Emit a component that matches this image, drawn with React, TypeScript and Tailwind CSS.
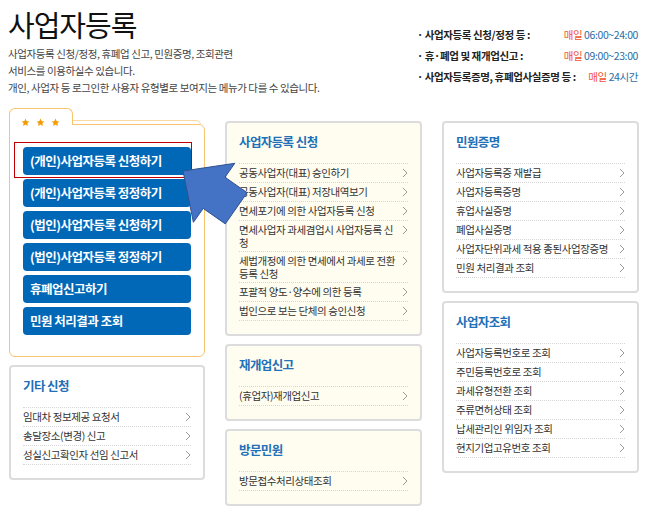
import type { ReactNode } from "react";

type Entry = string | string[];

const applyItems: Entry[] = [
  "공동사업자(대표) 승인하기",
  "공동사업자(대표) 저장내역보기",
  "면세포기에 의한 사업자등록 신청",
  ["면세사업자 과세겸업시 사업자등록 신", "청"],
  ["세법개정에 의한 면세에서 과세로 전환", "등록 신청"],
  "포괄적 양도·양수에 의한 등록",
  "법인으로 보는 단체의 승인신청",
];

const certItems: Entry[] = [
  "사업자등록증 재발급",
  "사업자등록증명",
  "휴업사실증명",
  "폐업사실증명",
  "사업자단위과세 적용 종된사업장증명",
  "민원 처리결과 조회",
];

const lookupItems: Entry[] = [
  "사업자등록번호로 조회",
  "주민등록번호로 조회",
  "과세유형전환 조회",
  "주류면허상태 조회",
  "납세관리인 위임자 조회",
  "현지기업고유번호 조회",
];

const etcItems: Entry[] = ["임대차 정보제공 요청서", "송달장소(변경) 신고", "성실신고확인자 선임 신고서"];

const buttons = [
  "(개인)사업자등록 신청하기",
  "(개인)사업자등록 정정하기",
  "(법인)사업자등록 신청하기",
  "(법인)사업자등록 정정하기",
  "휴폐업신고하기",
  "민원 처리결과 조회",
];

const hours = [
  { label: "· 사업자등록 신청/정정 등 :", time: "06:00~24:00" },
  { label: "· 휴·폐업 및 재개업신고 :", time: "09:00~23:00" },
  { label: "· 사업자등록증명, 휴폐업사실증명 등 :", time: "24시간" },
];

function Chevron() {
  return (
    <svg width="6" height="10" viewBox="0 0 6 10" className="shrink-0">
      <polyline points="1,1 5,5 1,9" fill="none" stroke="#9a9a9a" strokeWidth="1" />
    </svg>
  );
}

function Star() {
  return (
    <svg width="9" height="9" viewBox="0 0 24 24">
      <path d="M12 1.5l3.1 7 7.4.6-5.6 4.9 1.7 7.4L12 17.5l-6.6 3.9 1.7-7.4L1.5 9.1l7.4-.6z" fill="#f39a00" />
    </svg>
  );
}

function Card({ title, items, cream, children }: { title: string; items: Entry[]; cream?: boolean; children?: ReactNode }) {
  return (
    <div className={`rounded-[4px] border-2 border-[#dcdcdc] pb-[13px] pl-[12px] pr-[12px] pt-[9px] ${cream ? "bg-[#fffdf0]" : "bg-white"}`}>
      <h3 className="mb-[11px] h-[20px] text-[12.5px] font-bold leading-[20px] tracking-[-0.6px] text-[#2170b8]">{title}</h3>
      <ul className="border-t border-dotted border-[#d6d6d6]">
        {items.map((it, i) => {
          const lines = Array.isArray(it) ? it : [it];
          return (
            <li
              key={i}
              className="flex min-h-[19px] items-start justify-between border-b border-dotted border-[#d6d6d6] py-[2px] text-[10.5px] leading-[13px] tracking-[-0.4px] text-[#333]"
            >
              <span className="whitespace-nowrap">
                {lines.map((l, j) => (
                  <span key={j} className="block">
                    {l}
                  </span>
                ))}
              </span>
              <span className="flex h-[13px] items-center">
                <Chevron />
              </span>
            </li>
          );
        })}
      </ul>
      {children}
    </div>
  );
}

export default function App() {
  return (
    <div className="relative h-[519px] w-[650px] overflow-hidden bg-white font-['Noto_Sans_CJK_KR',sans-serif] text-[#333]">
      <header className="flex h-[108px] justify-between">
        <div className="pl-[8px] pt-[7px]">
          <h1 className="text-[29px] leading-[34px] tracking-[-1px] text-[#111]">사업자등록</h1>
          <p className="mt-[4px] text-[10.5px] leading-[17px] tracking-[-0.4px] text-[#444]">
            사업자등록 신청/정정, 휴폐업 신고, 민원증명, 조회관련
            <br />
            서비스를 이용하실수 있습니다.
            <br />
            개인, 사업자 등 로그인한 사용자 유형별로 보여지는 메뉴가 다를 수 있습니다.
          </p>
        </div>
        <div className="mr-[12px] mt-[24px] flex h-fit w-[221px] flex-col text-[10.5px] leading-[21px] tracking-[-0.4px]">
          {hours.map((h) => (
            <div key={h.label} className="flex justify-between">
              <span className="whitespace-nowrap font-semibold text-[#222]">{h.label}</span>
              <span className="whitespace-nowrap text-[#2c6da6]">
                <span className="text-[#f0532d]">매일</span> {h.time}
              </span>
            </div>
          ))}
        </div>
      </header>

      <div className="grid grid-cols-[196px_197px_197px] gap-x-[20px] pl-[9px]">
        <div className="flex flex-col gap-[8px]">
          <div>
            <div className="flex h-[17px]">
              <div className="relative z-10 flex h-[17px] w-[64px] gap-[6px] rounded-t-[6px] border border-b-0 border-[#f8c46f] bg-white pl-[11px] pt-[9px]">
                <Star />
                <Star />
                <Star />
              </div>
              <div className="mr-[4px] h-[5px] flex-1 self-end rounded-tr-[6px] border-r border-t border-[#fbd9a3]" />
            </div>
            <div className="-mt-px rounded-b-[6px] rounded-tr-[6px] border border-[#f8c46f] bg-white px-[13px] pb-[21px] pt-[22px]">
              <div className="flex flex-col gap-[4px]">
                {buttons.map((b, i) => (
                  <div key={b} className="relative">
                    {i === 0 && <div className="absolute -bottom-[3px] -left-[9px] -right-[1px] -top-[5px] border border-[#c00000]" />}
                    <div className="flex h-[28px] items-center rounded-[4px] bg-[#0068b7] pl-[7px] text-[12.5px] font-bold tracking-[-0.5px] text-white">
                      {b}
                    </div>
                  </div>
                ))}
              </div>
            </div>
          </div>
          <Card title="기타 신청" items={etcItems} />
        </div>

        <div className="mt-[13px] flex flex-col gap-[8px]">
          <Card title="사업자등록 신청" items={applyItems} cream />
          <Card title="재개업신고" items={["(휴업자)재개업신고"]} cream />
          <Card title="방문민원" items={["방문접수처리상태조회"]} cream />
        </div>

        <div className="mt-[13px] flex flex-col gap-[8px]">
          <Card title="민원증명" items={certItems} />
          <Card title="사업자조회" items={lookupItems} />
        </div>
      </div>

      <svg className="pointer-events-none absolute left-0 top-0" width="650" height="519">
        <polygon
          points="183,171 234.8,163.3 225,177.2 247.1,192.7 225.3,223.9 203.2,208.4 193.4,222.3"
          fill="#4472c4"
          stroke="#2f528f"
          strokeWidth="1"
        />
      </svg>
    </div>
  );
}
